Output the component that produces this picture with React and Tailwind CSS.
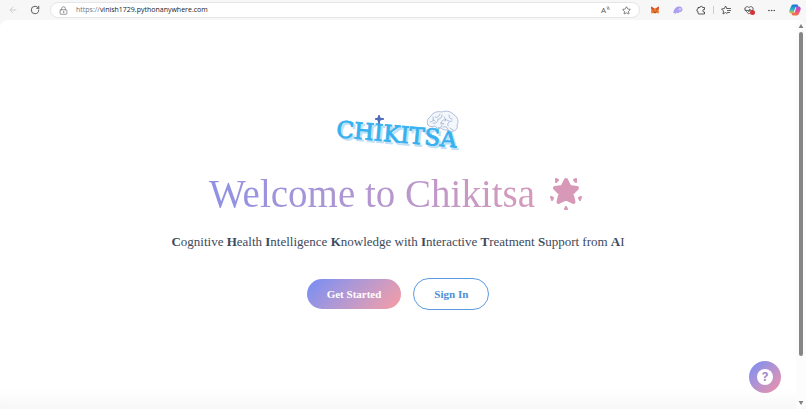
import { ArrowLeft, RotateCw, LockKeyhole, Star, Ellipsis, HeartPulse } from 'lucide-react';

const ACRONYM = [
  ['C', 'ognitive'],
  ['H', 'ealth'],
  ['I', 'ntelligence'],
  ['K', 'nowledge with'],
  ['I', 'nteractive'],
  ['T', 'reatment'],
  ['S', 'upport from'],
  ['A', 'I'],
];

function FoxIcon() {
  return (
    <svg viewBox="0 0 20 18" className="h-2 w-2.5" aria-hidden="true">
      <path d="M1 1 8 5h4l7-4-1 7 1 5-1 4-5-1-3 1-3-1-5 1-1-4 1-5z" fill="#ee7a30" />
      <path d="M1 1 8 5 6 9 2 8zM19 1l-7 4 2 4 4-1z" fill="#d0522a" />
      <path d="m5 10 3 1v2zM15 10l-3 1v2zM8 14h4l-1 2H9z" fill="#352820" />
    </svg>
  );
}

function GhostIcon() {
  return (
    <svg viewBox="0 0 20 16" className="h-2 w-2.5" aria-hidden="true">
      <path d="M1 12C2 5 7 1 13 1c4 0 6 3 6 6 0 4-3 5-6 5-2 3-4 3-6 1-1 3-3 3-4 1-2 1-3 0-2-2z" fill="#ab9ff2" />
      <path d="m13 5-1 3m4-3-1 3" stroke="#efeaff" strokeWidth="1.4" strokeLinecap="round" />
    </svg>
  );
}

function ExtensionsIcon() {
  return (
    <svg viewBox="0 0 20 20" className="h-2.5 w-2.5" fill="none" stroke="#444" strokeWidth="1.8" strokeLinejoin="round" aria-hidden="true">
      <path d="M4 5h4a2.500 2.500 0 0 1 5 0h4v4h-1a2.500 2.500 0 0 0 0 5h1v4H6a2 2 0 0 1-2-2v-3a2.500 2.500 0 0 1 0-5z" />
    </svg>
  );
}

function FavoritesIcon() {
  return (
    <svg viewBox="0 0 20 18" className="h-2.5 w-2.5" fill="none" stroke="#444" strokeWidth="1.7" strokeLinejoin="round" strokeLinecap="round" aria-hidden="true">
      <path d="m12 6-3-5-2 5-6 1 4 4-1 6 5-3 3 2" />
      <path d="M12 6h7M13 10h6M13 14h4" />
    </svg>
  );
}

function CopilotIcon() {
  return (
    <svg viewBox="0 0 24 24" className="h-3 w-3" aria-hidden="true">
      <defs>
        <linearGradient id="copilotCool" x1="0" y1="0" x2="0" y2="1">
          <stop offset="0" stopColor="#1b6ed8" />
          <stop offset="0.55" stopColor="#29b5c8" />
          <stop offset="1" stopColor="#f3c522" />
        </linearGradient>
        <linearGradient id="copilotWarm" x1="0" y1="0" x2="0" y2="1">
          <stop offset="0" stopColor="#a24de0" />
          <stop offset="0.5" stopColor="#e74b98" />
          <stop offset="1" stopColor="#f5793a" />
        </linearGradient>
      </defs>
      <path d="M8 1h8c2 0 2 2 3 5h-4c-3 0-3 3-4 6l-2 7H5c-4 0-5-3-4-7l3-7c1-2 2-4 4-4z" fill="url(#copilotCool)" />
      <path d="M15 5h4c4 0 5 3 4 7l-3 7c-1 2-2 4-4 4H8c-2 0-2-2-3-5h4c3 0 3-3 4-6z" fill="url(#copilotWarm)" />
    </svg>
  );
}

function Logo() {
  return (
    <svg viewBox="0 0 140 56" className="h-14 w-35" role="img" aria-label="Chikitsa">
      <g transform="rotate(5 9 31)" fontFamily="'DejaVu Serif'" fontSize="23">
        <text x="10" y="35" fill="#bfe0f7" stroke="#bfe0f7">CHIKITSA</text>
        <text x="8" y="33" fill="#35b1ef" stroke="#35b1ef" strokeWidth="0.8">CHIKITSA</text>
      </g>
      <path d="m51 11 1 3 4 1-4 1-1 4-1-4-3-1 3-1z" fill="#4d69bd" stroke="#4d69bd" />
      <g fill="#f4f7fc" stroke="#8fa5c8" strokeWidth="0.7" strokeLinecap="round">
        <path d="M100 21c-2-3 0-7 3-9 2-4 7-5 11-4 5-2 10 0 12 3 4 2 5 7 3 10 1 3-1 6-4 6-2 1-4 0-5-1-3 0-5 0-7-2-3 1-5 0-6-2-3 1-6 1-7-1z" />
        <path fill="none" d="M102 18c3 0 4-2 3-5m2 0c2 1 4 0 5-3m-7 9c3 1 5-1 5-4 2 0 4-1 4-4m-1 9c0-3 2-5 5-4m-8 8c2 0 4-1 4-3m2-8c2 1 2 3 1 4m4-6c0 3 1 4 3 4m-4 7c-1-3 1-5 4-5m-9 6c2-1 4 0 5 2m2-1 3 2m-18-9-2-1m8 3 3 1m3-4 2 1" />
      </g>
    </svg>
  );
}

function Sparkle() {
  return (
    <svg viewBox="0 0 34 34" className="h-8.5 w-8.5" fill="#d898b8" stroke="#d898b8" strokeLinejoin="round" aria-hidden="true">
      <path d="M17 3 20.500 10 28 11 22.500 16.500 24.500 25 17 21.500 9.500 25 11.500 16.500 6 11 13.500 10z" strokeWidth="4" />
      <path d="M7 2 9 3 7 5zM27 2 25 3 27 5zM2 20 4 21 3 23zM32 20 30 21 31 23zM17 30 18 32H16z" strokeWidth="2" />
    </svg>
  );
}

function BrowserBar() {
  return (
    <header className="flex h-5 items-center bg-[#f7f7f7] text-[#555]">
      <button aria-label="Back" className="ml-2 text-[#c8c8c8]"><ArrowLeft size={10} /></button>
      <button aria-label="Refresh" className="ml-3 text-[#444]"><RotateCw size={10} strokeWidth={2} /></button>
      <div className="ml-2.5 flex h-4 flex-1 items-center rounded-full border border-[#e6e6e6] bg-white px-2">
        <LockKeyhole size={9} className="text-[#777]" />
        <a href="#site" className="ml-2 flex-1 font-['Open_Sans',sans-serif] text-[7px] leading-3 text-[#222]">
          <span className="text-[#777]">https://</span>vinish1729.pythonanywhere.com
        </a>
        <button aria-label="Read aloud" className="mr-3 flex items-start font-['Open_Sans',sans-serif] text-[8px] leading-3">
          A
          <svg viewBox="0 0 6 8" className="mt-0.5 h-1 w-1" fill="none" stroke="currentColor" strokeWidth="1.4" strokeLinecap="round">
            <path d="M1 3c1 1 1 2 1 3M3 1c2 2 2 4 2 6" />
          </svg>
        </button>
        <button aria-label="Add to favorites"><Star size={9} /></button>
      </div>
      <div className="ml-2.5 flex items-center gap-[13px] pr-[5px]">
        <button aria-label="Fox wallet"><FoxIcon /></button>
        <button aria-label="Ghost wallet"><GhostIcon /></button>
        <button aria-label="Extensions"><ExtensionsIcon /></button>
        <span className="-mx-1.5 h-2 w-px bg-[#ccc]" />
        <button aria-label="Favorites"><FavoritesIcon /></button>
        <button aria-label="Browser essentials" className="relative text-[#444]">
          <HeartPulse size={10} />
          <span className="absolute -right-px bottom-0 h-[5px] w-[5px] rounded-full bg-[#d13438]" />
        </button>
        <button aria-label="Settings" className="text-[#444]"><Ellipsis size={9} /></button>
        <button aria-label="Copilot"><CopilotIcon /></button>
      </div>
    </header>
  );
}

function Scrollbar() {
  return (
    <div className="flex w-2.5 flex-col items-center gap-1 bg-[#fcfcfc] pt-1 pb-1" aria-hidden="true">
      <svg viewBox="0 0 6 5" className="h-1 w-1.5" fill="#808080"><path d="M3 0 6 5H0z" /></svg>
      <div className="flex w-1 flex-1 flex-col">
        <div className="h-8/9 rounded-full bg-[#868686]" />
      </div>
      <svg viewBox="0 0 6 5" className="h-1 w-1.5" fill="#808080"><path d="M0 0h6L3 5z" /></svg>
    </div>
  );
}

function App() {
  return (
    <div className="flex min-h-screen flex-col bg-[#f7f7f7]">
      <BrowserBar />
      <div className="flex flex-1 overflow-hidden rounded-lg bg-linear-to-b from-white from-95% to-[#f7f7f7] font-['Liberation_Serif',serif]">
        <main className="flex flex-1 flex-col items-center pt-21">
          <Logo />
          <div className="mt-2.5 flex items-center gap-3.5 pr-1">
            <h1 className="bg-linear-to-r from-[#8f91e4] to-[#d69aba] bg-clip-text text-[39px] leading-12 text-transparent">
              Welcome to Chikitsa
            </h1>
            <Sparkle />
          </div>
          <p className="mt-3.5 text-[13px] leading-5 text-[#3d4a5c]">
            {ACRONYM.map(([initial, rest], i) => (
              <span key={i}>
                <strong>{initial}</strong>{rest}{i < ACRONYM.length - 1 && ' '}
              </span>
            ))}
          </p>
          <div className="mt-6.5 flex items-center gap-3">
            <button className="h-[30px] rounded-full bg-linear-135 from-[#748df5] to-[#f79ca2] px-5 text-[11px] font-bold text-white">
              Get Started
            </button>
            <button className="h-8 rounded-full border border-[#5b9be0] bg-white px-5 text-[11px] font-bold text-[#4a90d9]">
              Sign In
            </button>
          </div>
        </main>
        <Scrollbar />
      </div>
      <button aria-label="Help" className="fixed right-[25px] bottom-4 flex h-8 w-8 items-center justify-center rounded-full bg-linear-135 from-[#748df5] to-[#f08fa5]">
        <span className="flex h-4 w-4 items-center justify-center rounded-full bg-white font-['Inter',sans-serif] text-[12px] font-bold text-[#a28cc8]">?</span>
      </button>
    </div>
  );
}

export default App;
